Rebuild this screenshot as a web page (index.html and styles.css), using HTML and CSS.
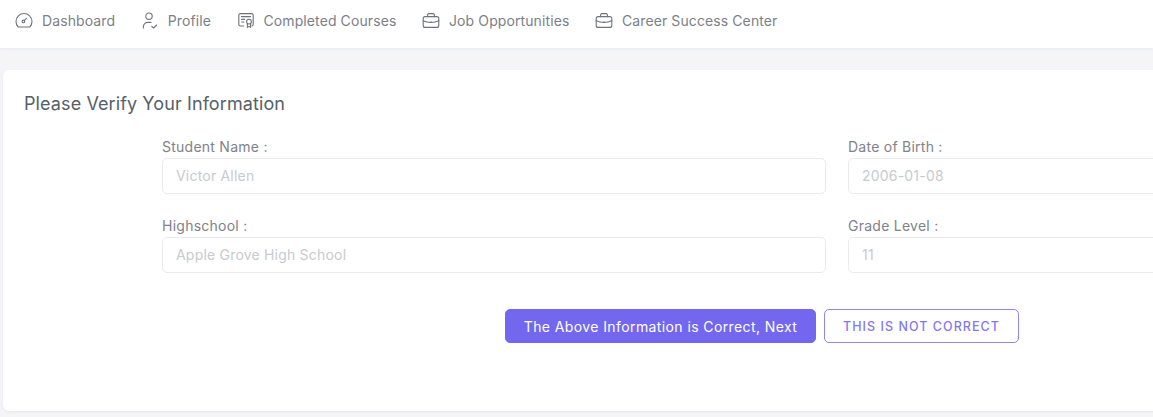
FILE: index.html
```html
<!DOCTYPE html>
<html lang="en">
<head>
    <meta charset="UTF-8">
    <title>Verify Information</title>
    <link rel="stylesheet" href="styles.css">
</head>
<body>
<header class="topnav">
    <a class="nav-link" href="#">
        <svg class="nav-icon" viewBox="0 0 18 18"><path d="M3.200 16h11.600A8 8 0 1 0 3.200 16z"/><circle cx="8.400" cy="10.400" r="1.300"/><path d="M9.400 9.400l2-2"/></svg>
        Dashboard
    </a>
    <a class="nav-link" href="#">
        <svg class="nav-icon" viewBox="0 0 18 18"><circle cx="8" cy="5.200" r="3.200"/><path d="M2.400 17v-1.200a4.600 4.600 0 0 1 4.600-4.400h3"/><path d="M10.800 15.400l1.800 1.600 3-3"/></svg>
        Profile
    </a>
    <a class="nav-link" href="#">
        <svg class="nav-icon" viewBox="0 0 18 18"><path d="M6.500 15H3.400a1.600 1.600 0 0 1-1.600-1.600V4.200a1.600 1.600 0 0 1 1.600-1.600h11.200a1.600 1.600 0 0 1 1.600 1.600v9.200a1.600 1.600 0 0 1-1.200 1.500"/><path d="M4.400 5.600h9.200M4.600 8.400h3M4.600 11h2.400"/><circle cx="12" cy="10.600" r="2.400"/><path d="M10.400 12.600v3.800l1.600-1 1.600 1v-3.800"/></svg>
        Completed Courses
    </a>
    <a class="nav-link" href="#">
        <svg class="nav-icon" viewBox="0 0 18 18"><rect x="1.200" y="5.600" width="15.600" height="10.800" rx="2"/><path d="M5.600 5.600V4a1.400 1.400 0 0 1 1.400-1.400h4A1.400 1.400 0 0 1 12.400 4v1.600"/><path d="M1.200 9.800c2.400 1.200 4.900 1.700 7.800 1.700s5.400-.5 7.800-1.700"/><path d="M9 10.600v.6"/></svg>
        Job Opportunities
    </a>
    <a class="nav-link" href="#">
        <svg class="nav-icon" viewBox="0 0 18 18"><rect x="1.200" y="5.600" width="15.600" height="10.800" rx="2"/><path d="M5.600 5.600V4a1.400 1.400 0 0 1 1.400-1.400h4A1.400 1.400 0 0 1 12.400 4v1.600"/><path d="M1.200 9.800c2.400 1.200 4.900 1.700 7.800 1.700s5.400-.5 7.800-1.700"/><path d="M9 10.600v.6"/></svg>
        Career Success Center
    </a>
</header>

<main class="card">
    <h2 class="card-title">Please Verify Your Information</h2>
    <form class="verify-form">
        <div class="field">
            <label for="name">Student Name :</label>
            <input id="name" type="text" placeholder="Victor Allen" disabled>
        </div>
        <div class="field">
            <label for="dob">Date of Birth :</label>
            <input id="dob" type="text" placeholder="2006-01-08" disabled>
        </div>
        <div class="field">
            <label for="school">Highschool :</label>
            <input id="school" type="text" placeholder="Apple Grove High School" disabled>
        </div>
        <div class="field">
            <label for="grade">Grade Level :</label>
            <input id="grade" type="text" placeholder="11" disabled>
        </div>
    </form>
    <div class="actions">
        <button class="btn btn-primary" type="button">The Above Information is Correct, Next</button>
        <button class="btn btn-outline" type="button">THIS IS NOT CORRECT</button>
    </div>
</main>
</body>
</html>
```

FILE: styles.css
```css
html, body {
    height: 100%;
}
body {
    margin: 0;
    width: 1153px;
    height: 417px;
    overflow: hidden;
    background-color: #f5f5f8;
    font-family: Inter, "Liberation Sans", sans-serif;
    color: #697a8d;
}
.topnav {
    display: flex;
    align-items: flex-start;
    gap: 25.6px;
    height: 48px;
    padding: 11px 0 0 15px;
    box-sizing: border-box;
    background-color: #fff;
    box-shadow: 0 1px 3px rgba(67, 89, 113, 0.08);
}
.nav-link {
    display: flex;
    align-items: center;
    gap: 9px;
    height: 18px;
    font-size: 14px;
    letter-spacing: 0.1px;
    color: #7c7f88;
    text-decoration: none;
    white-space: nowrap;
}
.nav-icon {
    width: 18px;
    height: 18px;
    fill: none;
    stroke: #6f727b;
    stroke-width: 1.1;
    stroke-linecap: round;
    stroke-linejoin: round;
}
.card {
    box-sizing: border-box;
    width: 1250px;
    height: 341px;
    margin: 22px 0 0 3px;
    padding: 23px 0 0 21px;
    background-color: #fff;
    border-radius: 6px;
    box-shadow: 0 1px 3px rgba(67, 89, 113, 0.08);
}
.card-title {
    margin: 0;
    font-size: 18px;
    font-weight: 400;
    line-height: 22px;
    letter-spacing: 0.1px;
    color: #566069;
}
.verify-form {
    display: grid;
    grid-template-columns: 664px 330px;
    column-gap: 22px;
    row-gap: 23px;
    margin: 23px 0 0 138px;
}
.field label {
    display: block;
    margin-bottom: 2px;
    font-size: 14px;
    line-height: 18px;
    letter-spacing: 0.25px;
    color: #7f828a;
}
.field input {
    display: block;
    box-sizing: border-box;
    width: 100%;
    height: 36px;
    padding: 0 13px 2px;
    background-color: #fff;
    border: 1px solid #e9ebee;
    border-radius: 5px;
    font-family: inherit;
    font-size: 14px;
    letter-spacing: 0.2px;
}
.field input::placeholder {
    color: #c8cacf;
    opacity: 1;
}
.actions {
    display: flex;
    gap: 7px;
    margin: 36px 0 0 481px;
}
.btn {
    box-sizing: border-box;
    height: 34px;
    padding-bottom: 1px;
    border-radius: 5px;
    font-family: inherit;
    cursor: pointer;
}
.btn-primary {
    width: 311px;
    background-color: #7367ef;
    border: 1px solid #7367ef;
    color: #fff;
    font-size: 14px;
    font-weight: 400;
    letter-spacing: 0.4px;
}
.btn-outline {
    width: 195px;
    margin-left: 1px;
    background-color: #fff;
    border: 1px solid #8f85f3;
    color: #8378f0;
    font-size: 12.5px;
    font-weight: 500;
    letter-spacing: 1.05px;
}
```
